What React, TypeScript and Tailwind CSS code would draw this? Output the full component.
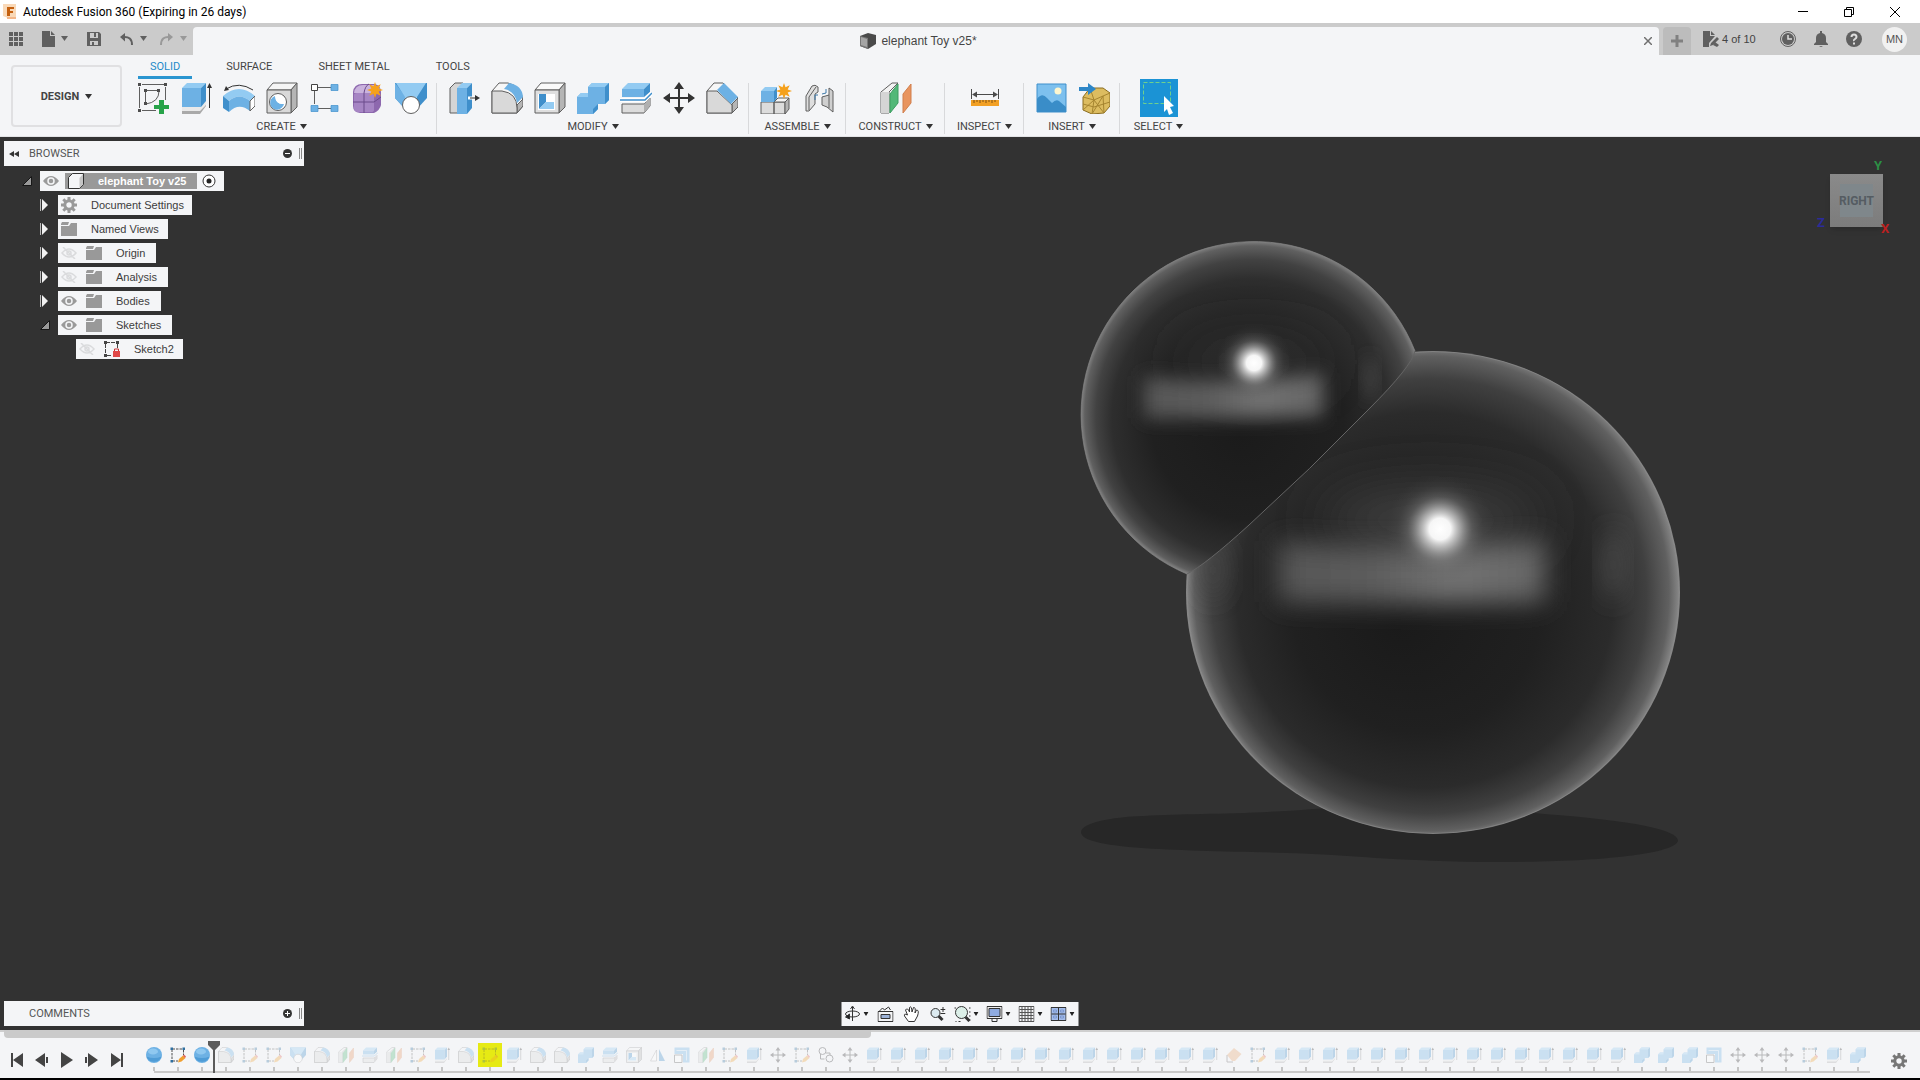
import type { ReactNode } from 'react';
import clsx from 'clsx';

const OUT = '#5f5f5f';
const BLUE = '#6db1e4';
const BLUE_LIGHT = '#93cbf2';
const BLUE_DARK = '#3f8fcb';

const star = (cx: number, cy: number) => {
  const points = Array.from({ length: 16 }, (_, i) => {
    const r = i % 2 ? 4 : 8;
    const a = (Math.PI * i) / 8;
    return `${(cx + r * Math.sin(a)).toFixed(1)},${(cy - r * Math.cos(a)).toFixed(1)}`;
  }).join(' ');
  return <polygon points={points} fill="#f5a11c" />;
};

const sketchFrame = (
  <>
    <path d="M5 2.500H27M2.500 5V26M28.500 5V18M5 28.500H19" stroke={OUT} strokeWidth="1" fill="none" />
    <path d="M1 1h3v3h-3zM27 1h3v3h-3zM1 27h3v3h-3z" fill="#4d4d4d" />
  </>
);

const glyphs: Record<string, ReactNode> = {
  sketch: (
    <>
      {sketchFrame}
      <path d="M9 8.500H22M8.500 9V22M22 9Q22 20 9 22" stroke={OUT} fill="none" />
      <path d="M7 7h3v3h-3zM20 7h3v3h-3zM7 20h3v3h-3z" fill="#4d4d4d" />
      <path d="M22 18h5v5h5v4h-5v5h-5v-5h-5v-4h5z" fill="#27a349" />
    </>
  ),
  sketchEdit: (
    <>
      <path d="M5 4H25M4 5V27M27 6V16M5 28H16" stroke="#4d4d4d" strokeWidth="2" strokeDasharray="5 2" fill="none" />
      <path d="M1 1h5v5h-5zM25 1h5v5h-5zM1 26h5v5h-5z" fill="#2f6f9f" />
      <path d="M16 31l2-7 8-7 5 5-8 7z" fill="#f0a030" />
      <path d="M26 17l2-2 4 4-2 3z" fill="#e06060" />
    </>
  ),
  extrude: (
    <>
      <path d="M2 28H20L26 21V24L20 32H2z" fill="#a9a9a9" />
      <path d="M2 25H21L26 19V23L20 29H2z" fill="#e9e9e9" />
      <path d="M2 6L7 1H26L21 6z" fill={BLUE_LIGHT} />
      <path d="M2 6H21V25H2z" fill={BLUE} />
      <path d="M21 6L26 1V19L21 25z" fill={BLUE_DARK} />
      <path d="M29.500 26V4" stroke="#333" />
      <path d="M29.500 1l2.500 5h-5z" fill="#333" />
    </>
  ),
  bend: (
    <>
      <path d="M0 14Q16 0 32 14L27 19Q16 10 6 19z" fill={BLUE_LIGHT} />
      <path d="M0 14L6 19V30L0 26z" fill={BLUE_DARK} />
      <path d="M6 19Q16 10 27 19V29Q16 20 6 30z" fill={BLUE} />
      <path d="M27 19L32 14V24L27 29z" fill="#fff" stroke={OUT} />
      <path d="M3 7Q16 -1 30 8" stroke="#333" fill="none" />
      <path d="M1 9l2-5 3 4z" fill="#333" />
    </>
  ),
  hole: (
    <>
      <path d="M1 8L7 1H31L25 8z" fill="#f5f5f5" stroke={OUT} />
      <path d="M25 8L31 1V25L25 31z" fill="#b5b5b5" stroke={OUT} />
      <path d="M1 8H25V31H1z" fill="#d9d9d9" stroke={OUT} />
      <circle cx="12" cy="20" r="8.500" fill="#fff" stroke={OUT} />
      <path d="M9 14A7 7 0 1 0 18 22Q10 23 9 14z" fill={BLUE} />
      <path d="M9 14Q10 23 18 22A7 7 0 0 0 9 14z" fill="#fff" />
    </>
  ),
  pattern: (
    <>
      <path d="M8 5.500H22M5.500 8V22M8 26.500H22" stroke={OUT} />
      <path d="M2.500 2.500h6v6h-6z" fill="#fff" stroke="#444" />
      <path d="M22 2.500h7v6h-7zM2 23.500h7v6h-7zM22 23.500h7v6h-7z" fill={BLUE} stroke={BLUE_DARK} strokeWidth=".7" />
    </>
  ),
  form: (
    <>
      <path d="M1 10Q2 2 10 2H23Q29 4 29 10V23Q28 28 22 31H8Q1 30 1 24z" fill="#8d68ae" />
      <path d="M2 11Q3 3 11 3H22Q28 5 28 8L22 11z" fill="#c9b2dd" />
      <path d="M2 13Q2 11 5 11H19Q22 11 22 14V28Q22 30 19 30H6Q2 30 2 26z" fill="#a685c4" />
      <path d="M12 11V31M1 20H22L29 15M12 11Q13 4 17 2" stroke="#6b4a8b" fill="none" />
      {star(23, 8)}
    </>
  ),
  loft: (
    <>
      <path d="M0 1H32V16L22 27H10L0 16z" fill={BLUE_DARK} />
      <path d="M0 1L10 14V27L0 16z" fill={BLUE} />
      <path d="M1 1H31L22 15V20H10V15z" fill={BLUE_LIGHT} />
      <circle cx="16" cy="23" r="8.500" fill="#fff" stroke={OUT} />
    </>
  ),
  pressPull: (
    <>
      <path d="M2 6L7 1H15L10 6V31H2z" fill="#d5d5d5" stroke={OUT} />
      <path d="M9 6L14 1H24L19 6z" fill={BLUE_LIGHT} />
      <path d="M9 6H19V32H9z" fill={BLUE} />
      <path d="M19 6L24 1V26L19 32z" fill={BLUE_DARK} />
      <path d="M20 16H28" stroke="#fff" strokeWidth="3" />
      <path d="M22 16H29" stroke="#333" />
      <path d="M27 13l5 3-5 3z" fill="#333" />
    </>
  ),
  fillet: (
    <>
      <path d="M1 9L8 1H17Q30 4 32 18V24L26 31H1z" fill="#f7f7f7" stroke={OUT} />
      <path d="M26 23L32 17V24L26 31z" fill="#b5b5b5" stroke={OUT} />
      <path d="M1 9H11Q26 11 26 26V31H1z" fill="#d9d9d9" stroke={OUT} />
      <path d="M13 7L18 1Q31 3 32 15L26 21Q24 9 13 7z" fill={BLUE} />
    </>
  ),
  shell: (
    <>
      <path d="M1 8L7 1H31L25 8z" fill="#fafafa" stroke={OUT} />
      <path d="M25 8L31 1V25L25 31z" fill="#b5b5b5" stroke={OUT} />
      <path d="M1 8H25V31H1z" fill="#dfdfdf" stroke={OUT} />
      <path d="M4 12H21V28H4z" fill="#fff" />
      <path d="M5 12H12V20L5 27z" fill={BLUE_DARK} />
      <path d="M5 27L12 20H20V27z" fill={BLUE_LIGHT} />
      <path d="M12 13H20V20H12z" fill="#fff" />
    </>
  ),
  combine: (
    <>
      <path d="M0 15L4 11H11V5L15 1H32V18L28 22H21V27L16 32H0z" fill={BLUE} />
      <path d="M11 5L15 1H32L28 5z M0 15L4 11H11V15z" fill={BLUE_LIGHT} />
      <path d="M28 5L32 1V18L28 22zM16 27L21 22V27L16 32z" fill={BLUE_DARK} />
    </>
  ),
  split: (
    <>
      <path d="M2 22H24L30 16V24L24 31H2z" fill="#dcdcdc" stroke={OUT} />
      <path d="M24 22L30 16V24L24 31z" fill="#b0b0b0" />
      <path d="M2 7L8 1H30L24 7z" fill={BLUE_LIGHT} />
      <path d="M2 7H24V15H2z" fill={BLUE} />
      <path d="M24 7L30 1V10L24 15z" fill={BLUE_DARK} />
      <path d="M0 18H25L32 11" stroke="#fff" strokeWidth="4" fill="none" />
      <path d="M0 18H25L32 11" stroke={BLUE_DARK} strokeWidth="1.500" fill="none" />
    </>
  ),
  move: (
    <>
      <path d="M16 4V28M4 16H28" stroke="#333" strokeWidth="2" />
      <path d="M16 0l5 7h-10zM16 32l5-7h-10zM0 16l7-5v10zM32 16l-7-5v10z" fill="#333" />
    </>
  ),
  chamfer: (
    <>
      <path d="M1 9L8 1H17L32 16V25L26 31H1z" fill="#f7f7f7" stroke={OUT} />
      <path d="M26 22L32 16V25L26 31z" fill="#b5b5b5" stroke={OUT} />
      <path d="M1 9H11L26 23V31H1z" fill="#d9d9d9" stroke={OUT} />
      <path d="M11 8L18 1L32 15L25 22z" fill={BLUE} />
    </>
  ),
  assemble: (
    <>
      <path d="M1 20H14V32H1zM14 20H25V32H14z" fill="#dcdcdc" stroke={OUT} />
      <path d="M14 20L18 16H29L25 20z" fill="#f5f5f5" stroke={OUT} />
      <path d="M25 20L29 16V27L25 32z" fill="#b5b5b5" stroke={OUT} />
      <path d="M1 9L5 5H17L14 9z" fill={BLUE_LIGHT} />
      <path d="M1 9H14V20H1z" fill={BLUE} />
      <path d="M14 9L17 5V16L14 20z" fill={BLUE_DARK} />
      {star(24, 9)}
    </>
  ),
  joint: (
    <>
      <path d="M3 29V14L9 4Q12 2 15 5V10L12 12V22L6 29z" fill="#dedede" stroke={OUT} />
      <path d="M6 28V15L13 5" stroke={OUT} fill="none" />
      <path d="M30 30V9L26 6V13L19 15V23L24 25z" fill="#cfcfcf" stroke={OUT} />
      <path d="M26 13V26" stroke={OUT} />
      <path d="M23 7V11L19 12M12 18V13H15" stroke="#3d79a8" fill="none" />
    </>
  ),
  plane: (
    <>
      <path d="M1 10L12 1H18L9 10V31H1z" fill="#f3f3f3" stroke={OUT} />
      <path d="M1 10H9V31H1z" fill="#d5d5d5" />
      <path d="M10 12L18 2V21L10 31z" fill="#52b878" stroke="#3c9d60" />
      <path d="M23 12L31 2V21L23 31z" fill="#e8945f" stroke="#d17f4c" />
    </>
  ),
  measure: (
    <>
      <path d="M2.500 7V17M29.500 7V17M4 12.500H28" stroke="#4a4a4a" />
      <path d="M3 12.500l5-3v6zM29 12.500l-5-3v6z" fill="#4a4a4a" />
      <path d="M2 18H30V24H2z" fill="#f2a024" />
      <path d="M5 18v3M8 18v2M11 18v3M14 18v2M17 18v3M20 18v2M23 18v3M26 18v2" stroke="#805010" />
    </>
  ),
  picture: (
    <>
      <path d="M2 2H31V30H2z" fill="#7dc0ee" stroke={BLUE_DARK} />
      <path d="M2 17Q7 10 12 16L17 21Q21 17 24 19L31 25V30H2z" fill="#3a8dc8" />
      <circle cx="23" cy="9" r="3.500" fill="#fdf6cf" />
    </>
  ),
  mesh: (
    <>
      <path d="M5 15L12 6H25L32 11V24L26 31L14 32L5 28z" fill="#dcbc60" stroke="#8a6c20" />
      <path d="M5 15L16 18L25 14L32 11M16 18L14 32M25 14L26 31M5 28L16 18L26 31M5 22L16 25L32 20M25 14L14 32M12 6L16 18" stroke="#a68530" fill="none" />
      <path d="M1 5H10V1L18 7L10 13V9H1z" fill="#2d86c7" />
    </>
  ),
  mirror: (
    <>
      <path d="M13 6V28H1z" fill="#fff" stroke={OUT} />
      <path d="M18 4V28H30z" fill={BLUE_DARK} />
    </>
  ),
  scale: (
    <>
      <path d="M1 1H31V31H18V14H1z" fill={BLUE} />
      <path d="M1 16H16V31H1z" fill="#fff" stroke={OUT} strokeWidth="2" />
      <path d="M5 7H25V27" stroke="#fff" strokeWidth="2" fill="none" opacity=".6" />
    </>
  ),
  link: (
    <g fill="none" stroke="#333" strokeWidth="2">
      <circle cx="9" cy="8" r="7" />
      <circle cx="23" cy="23" r="7" />
      <path d="M5 14v10h8M16 12h8v5" />
    </g>
  ),
  erase: (
    <>
      <path d="M2 16L16 2L31 14L18 28H12z" fill="#e8a36c" />
      <path d="M2 16V30H14" stroke={OUT} strokeWidth="2" fill="none" />
    </>
  ),
  sphere: (
    <>
      <circle cx="16" cy="16" r="16" fill={BLUE} />
      <path d="M1 19Q16 25 31 19A16 16 0 0 1 1 19z" fill="#4f9cd6" />
      <ellipse cx="14" cy="9" rx="10" ry="6" fill="#8fc8f0" />
    </>
  ),
};

function Glyph({ name, className = 'size-8' }: { name: string; className?: string }) {
  return (
    <svg viewBox="0 0 32 32" className={clsx('shrink-0', className)} aria-hidden="true">
      {glyphs[name]}
    </svg>
  );
}

function Caret({ className = 'text-[#333]' }: { className?: string }) {
  return (
    <svg viewBox="0 0 7 6" className={clsx('h-[6px] w-[7px] shrink-0', className)} aria-hidden="true">
      <path d="M0 0H7L3.500 5z" fill="currentColor" />
    </svg>
  );
}

function TitleBar() {
  return (
    <header className="flex h-[23px] shrink-0 items-center bg-white pl-[3px] font-['Roboto',sans-serif] text-[12px] text-black">
      <svg viewBox="0 0 14 16" className="h-4 w-[14px]" aria-hidden="true">
        <path d="M0 0H13V14H5L0 12z" fill="#f9d9b8" />
        <path d="M4 3H11V5H7V7H10V9H7V12H4z" fill="#c4600f" />
        <path d="M4 13H13V15H4z" fill="#f3b78a" />
      </svg>
      <h1 className="ml-[6px]">Autodesk Fusion 360 (Expiring in 26 days)</h1>
      <div className="ml-auto flex">
        <button type="button" aria-label="Minimize" className="flex h-[22px] w-[46px] items-center justify-center">
          <svg viewBox="0 0 10 10" className="size-[10px]"><path d="M0 4.500H10" stroke="#000" /></svg>
        </button>
        <button type="button" aria-label="Restore" className="flex h-[22px] w-[46px] items-center justify-center">
          <svg viewBox="0 0 10 10" className="size-[10px]" fill="none" stroke="#000">
            <path d="M.5 2.500H7.500V9.500H.5zM2.500 2V.5H9.500V7.500H8" />
          </svg>
        </button>
        <button type="button" aria-label="Close" className="mr-[2px] flex h-[22px] w-[46px] items-center justify-center">
          <svg viewBox="0 0 10 10" className="size-[10px]"><path d="M0 0L10 10M10 0L0 10" stroke="#000" /></svg>
        </button>
      </div>
    </header>
  );
}

function QuickBar() {
  return (
    <div className="flex h-8 shrink-0 bg-[#cbcbcb] text-[#606060]">
      <div className="flex w-[193px] shrink-0 items-center pl-[9px]">
        <button type="button" aria-label="Data panel">
          <svg viewBox="0 0 14 14" className="size-[14px]" fill="currentColor">
            <path d="M0 0h4v4h-4zM5 0h4v4h-4zM10 0h4v4h-4zM0 5h4v4h-4zM5 5h4v4h-4zM10 5h4v4h-4zM0 10h4v4h-4zM5 10h4v4h-4zM10 10h4v4h-4z" />
          </svg>
        </button>
        <button type="button" aria-label="File" className="ml-[19px] flex items-center gap-[6px]">
          <svg viewBox="0 0 13 16" className="h-4 w-[13px]" fill="currentColor"><path d="M0 0H8V5H13V16H0zM9 0L13 4H9z" /></svg>
          <Caret className="text-[#606060]" />
        </button>
        <button type="button" aria-label="Save" className="ml-[19px]">
          <svg viewBox="0 0 14 14" className="size-[14px]">
            <path d="M0 0H12L14 2V14H0z" fill="currentColor" />
            <path d="M3 1H11V6H3zM3 9H11V13H3z" fill="#cbcbcb" />
            <path d="M7 1H9V5H7zM5 10H7V14H5z" fill="currentColor" />
          </svg>
        </button>
        <button type="button" aria-label="Undo" className="ml-[19px] flex items-center gap-[7px]">
          <svg viewBox="0 0 13 12" className="h-3 w-[13px]">
            <path d="M3 4Q12 3 12 12" stroke="currentColor" strokeWidth="2" fill="none" />
            <path d="M0 4L5 0V8.500z" fill="currentColor" />
          </svg>
          <Caret className="text-[#606060]" />
        </button>
        <button type="button" aria-label="Redo" className="ml-[13px] flex items-center gap-[7px] text-[#999]">
          <svg viewBox="0 0 13 12" className="h-3 w-[13px]">
            <path d="M10 4Q1 3 1 12" stroke="currentColor" strokeWidth="2" fill="none" />
            <path d="M13 4L8 0V8.500z" fill="currentColor" />
          </svg>
          <Caret className="text-[#999]" />
        </button>
      </div>
      <div className="mt-1 flex min-w-0 flex-1 items-center rounded-t bg-[#f4f5f7]">
        <div className="flex flex-1 items-center justify-center gap-[5px] font-['Liberation_Sans',sans-serif] text-[12px] text-[#454545]">
          <svg viewBox="0 0 16 16" className="size-4" aria-hidden="true">
            <path d="M0 3L8 0L16 2V11L8 16L0 13z" fill="#4a4a4a" />
            <path d="M0 3L8 5V16L0 13z" fill="#777" />
            <path d="M1 4L7 6V14L1 12z" fill="#a5a5a5" />
          </svg>
          elephant Toy v25*
        </div>
        <button type="button" aria-label="Close document" className="mr-[7px]">
          <svg viewBox="0 0 8 8" className="size-2"><path d="M0 0L8 8M8 0L0 8" stroke="#707070" strokeWidth="1.500" /></svg>
        </button>
      </div>
      <button type="button" aria-label="New tab" className="mt-1 ml-1 flex w-7 shrink-0 items-center justify-center rounded-t bg-[#bcbcbc]">
        <svg viewBox="0 0 12 12" className="size-3"><path d="M6 0V12M0 6H12" stroke="#808080" strokeWidth="3" /></svg>
      </button>
      <div className="flex w-[229px] shrink-0 items-center pl-3">
        <button type="button" className="flex items-center gap-[3px] font-['Liberation_Sans',sans-serif] text-[11px] text-[#444]">
          <svg viewBox="0 0 16 16" className="size-4" fill="#606060">
            <path d="M0 0H7V5H12L6 12V16H0zM8 0L12 4H8zM8 12L14 6L16 8L10 14L7 15z" />
            <path d="M12 11L16 14L14 16L10 14z" />
          </svg>
          4 of 10
        </button>
        <button type="button" aria-label="Job status" className="ml-auto">
          <svg viewBox="0 0 16 16" className="size-4">
            <circle cx="8" cy="8" r="7.500" fill="none" stroke="currentColor" />
            <circle cx="8" cy="8" r="6" fill="currentColor" />
            <path d="M8 4V8H12" stroke="#ddd" fill="none" strokeWidth="1.500" />
          </svg>
        </button>
        <button type="button" aria-label="Notifications" className="ml-[17px]">
          <svg viewBox="0 0 16 16" className="size-4" fill="currentColor">
            <path d="M7 0H9V2Q13 3 13 7V11L15 13V14H1V13L3 11V7Q3 3 7 2zM6 15H10L8 16z" />
          </svg>
        </button>
        <button type="button" aria-label="Help" className="ml-[17px]">
          <svg viewBox="0 0 16 16" className="size-4">
            <circle cx="8" cy="8" r="8" fill="currentColor" />
            <path d="M5.500 6Q5.500 3.500 8 3.500T10.500 6Q10.500 7 9 8T8 10M8 11.500V13.500" stroke="#ddd" strokeWidth="2" fill="none" />
          </svg>
        </button>
        <button type="button" className="mr-[13px] ml-5 size-[25px] rounded-full bg-[#f1f1f1] font-['Liberation_Sans',sans-serif] text-[11px] text-[#555]">
          MN
        </button>
      </div>
    </div>
  );
}

const groups = [
  { label: 'CREATE', width: 'w-[311px]', icons: ['sketch', 'extrude', 'bend', 'hole', 'pattern', 'form', 'loft'] },
  { label: 'MODIFY', width: 'w-[312px]', icons: ['pressPull', 'fillet', 'shell', 'combine', 'split', 'move', 'chamfer'] },
  { label: 'ASSEMBLE', width: 'w-[97px]', icons: ['assemble', 'joint'] },
  { label: 'CONSTRUCT', width: 'w-[99px]', icons: ['plane'] },
  { label: 'INSPECT', width: 'w-[79px]', icons: ['measure'] },
  { label: 'INSERT', width: 'w-[96px]', icons: ['picture', 'mesh'] },
];

function Ribbon() {
  return (
    <section className="flex h-[82px] shrink-0 border-b border-[#e2e3e5] bg-[#f4f5f7] font-['Roboto',sans-serif] text-[11px] text-[#444]">
      <button
        type="button"
        className="mt-[10px] ml-[11px] flex h-[62px] w-[111px] shrink-0 items-center justify-center gap-[6px] rounded border-2 border-[#e0e0e2] pt-[2px] font-bold"
      >
        DESIGN <Caret />
      </button>
      <div className="ml-1">
        <nav className="ml-3 flex h-6 gap-[22px]">
          <button type="button" className="border-b-[3px] border-[#2a95d0] px-3 pt-[3px] text-[#1d8ac9]">SOLID</button>
          {['SURFACE', 'SHEET METAL', 'TOOLS'].map((tab) => (
            <button key={tab} type="button" className="border-b-[3px] border-transparent px-3 pt-[3px]">{tab}</button>
          ))}
        </nav>
        <div className="flex h-[57px]">
          {groups.map((group) => (
            <div key={group.label} className={clsx('relative flex flex-col items-center', group.width)}>
              <div className="flex h-[38px] shrink-0 items-center gap-[11px]">
                {group.icons.map((icon) => (
                  <button key={icon} type="button" aria-label={icon}>
                    <Glyph name={icon} />
                  </button>
                ))}
              </div>
              <button type="button" className="flex shrink-0 items-center gap-1 leading-5">
                {group.label} <Caret />
              </button>
              <span className="absolute top-1 right-0 h-[51px] w-px bg-[#d8d9db]" />
            </div>
          ))}
          <div className="flex w-[77px] flex-col items-center">
            <div className="flex h-[38px] shrink-0 items-center">
              <button type="button" aria-label="select" className="bg-[#1b93d5]">
                <svg viewBox="0 0 38 38" className="size-[38px]">
                  <path d="M3.500 3.500H30.500V24.500H3.500z" fill="none" stroke="#6fd08c" strokeDasharray="4 2" />
                  <path d="M24 17L34 27L30 28L33 34L29 36L27 30L24 33z" fill="#fff" />
                </svg>
              </button>
            </div>
            <button type="button" className="flex shrink-0 items-center gap-1 leading-5">
              SELECT <Caret />
            </button>
          </div>
        </div>
      </div>
    </section>
  );
}

function Eye({ off = false }: { off?: boolean }) {
  return (
    <svg viewBox="0 0 16 12" className="h-3 w-4 shrink-0" aria-hidden="true">
      {off ? (
        <g stroke="#dadbdd" fill="none" strokeWidth="1.500">
          <path d="M1 6Q8 -2 15 6Q8 14 1 6zM2 0L14 12" />
          <circle cx="8" cy="6" r="2" />
        </g>
      ) : (
        <>
          <path d="M0 6Q8 -4 16 6Q8 16 0 6z" fill="#9a9a9a" />
          <circle cx="8" cy="6" r="3" fill="#9a9a9a" stroke="#f4f5f7" strokeWidth="1.500" />
        </>
      )}
    </svg>
  );
}

function Gear({ className }: { className: string }) {
  return (
    <svg viewBox="0 0 16 16" className={clsx('size-4 shrink-0', className)} aria-hidden="true">
      <circle cx="8" cy="8" r="4.200" fill="none" stroke="currentColor" strokeWidth="3" />
      <path d="M8 0V3M8 13V16M0 8H3M13 8H16M2.300 2.300L4.500 4.500M11.500 11.500L13.700 13.700M13.700 2.300L11.500 4.500M4.500 11.500L2.300 13.700" stroke="currentColor" strokeWidth="3" />
    </svg>
  );
}

function Folder() {
  return (
    <svg viewBox="0 0 16 14" className="h-[14px] w-4 shrink-0" aria-hidden="true">
      <path d="M0 4H8L10 1H16V14H0z" fill="#999" />
      <path d="M0 2L1 0H8L7 3H0z" fill="#999" />
    </svg>
  );
}

function Twisty({ open = false }: { open?: boolean }) {
  return (
    <svg viewBox="0 0 10 12" className="h-3 w-[10px] shrink-0" aria-hidden="true">
      {open ? (
        <path d="M9.500 1.500V10.500H.5z" fill="#999" stroke="#161616" />
      ) : (
        <>
          <path d="M.5 0V12" stroke="#bbb" />
          <path d="M2 0L8 6L2 12z" fill="#f2f2f2" />
        </>
      )}
    </svg>
  );
}

const tree = [
  { label: 'Named Views' },
  { label: 'Origin', eye: 'off' },
  { label: 'Analysis', eye: 'off' },
  { label: 'Bodies', eye: 'on' },
  { label: 'Sketches', eye: 'on', open: true },
];

function Browser() {
  return (
    <aside className="absolute top-1 left-1 w-[300px] font-['Liberation_Sans',sans-serif] text-[11px] text-[#3c3c3c]">
      <div className="flex h-[25px] items-center bg-[#f4f5f7] pr-[2px] pl-[5px] font-['Roboto',sans-serif] text-[#555]">
        <svg viewBox="0 0 10 6" className="h-[6px] w-[10px]" aria-hidden="true">
          <path d="M5 0V6L0 3zM10 0V6L5 3z" fill="#333" />
        </svg>
        <h2 className="ml-[10px] pt-[2px]">BROWSER</h2>
        <PanelEnd />
      </div>
      <ul className="mt-[5px] flex flex-col gap-1">
        <li className="flex h-5 items-center pl-[18px]">
          <Twisty open />
          <div className="ml-2 flex h-5 items-center bg-[#f4f5f7] pl-[3px]">
            <Eye />
            <div className="ml-[6px] flex h-4 items-center bg-[#999] pr-[11px] pl-[3px] font-bold text-white">
              <svg viewBox="0 0 16 16" className="mr-[14px] size-4" aria-hidden="true">
                <path d="M.5 4.500L4.500 .5H15.500V11.500L11.500 15.500H.5z" fill="#f4f5f7" stroke="#333" />
                <path d="M11.500 5L15 1V11.500L11.500 15z" fill="#c5c5c5" />
              </svg>
              elephant Toy v25
            </div>
            <svg viewBox="0 0 14 14" className="mr-2 ml-[5px] size-[14px]" aria-hidden="true">
              <circle cx="7" cy="7" r="6" fill="#fff" stroke="#333" />
              <circle cx="7" cy="7" r="2.500" fill="#222" />
            </svg>
          </div>
        </li>
        <li className="flex h-5 items-center pl-9">
          <Twisty />
          <div className="ml-2 flex h-5 items-center bg-[#f4f5f7] pr-2 pl-[3px]">
            <Gear className="text-[#999]" />
            <span className="ml-[14px]">Document Settings</span>
          </div>
        </li>
        {tree.map((node) => (
          <li key={node.label} className="flex h-5 items-center pl-9">
            <Twisty open={node.open} />
            <div className={clsx('ml-2 flex h-5 items-center gap-[9px] bg-[#f4f5f7] pl-[3px]', node.eye ? 'pr-[11px]' : 'pr-[9px]')}>
              {node.eye && <Eye off={node.eye === 'off'} />}
              <Folder />
              <span className="ml-[5px]">{node.label}</span>
            </div>
          </li>
        ))}
        <li className="flex h-5 items-center pl-[72px]">
          <div className="flex h-5 items-center gap-[9px] bg-[#f4f5f7] pr-[9px] pl-[3px]">
            <Eye off />
            <svg viewBox="0 0 16 16" className="size-4" aria-hidden="true">
              <path d="M2 1.500H12M1.500 3V13M13.500 3V8M3 14.500H8" stroke="#444" strokeDasharray="4 1" />
              <path d="M0 0h3v3h-3zM12 0h3v3h-3zM0 13h3v3h-3z" fill="#444" />
              <path d="M9 10h7v6h-7z" fill="#e04848" />
              <path d="M10.500 10V8H14.500V10" stroke="#c83333" fill="none" />
            </svg>
            <span className="ml-[5px]">Sketch2</span>
          </div>
        </li>
      </ul>
    </aside>
  );
}

function PanelEnd({ plus = false }: { plus?: boolean }) {
  return (
    <>
      <button type="button" aria-label={plus ? 'Expand' : 'Collapse'} className="ml-auto">
        <svg viewBox="0 0 9 9" className="size-[9px]">
          <circle cx="4.500" cy="4.500" r="4.500" fill="#333" />
          <path d={plus ? 'M2 4.500H7M4.500 2V7' : 'M2 4.500H7'} stroke="#fff" />
        </svg>
      </button>
      <span className="ml-[7px] h-[11px] w-[3px] border-x border-[#888]" />
    </>
  );
}

function Scene() {
  return (
    <svg viewBox="0 137 1920 893" preserveAspectRatio="xMaxYMid meet" className="absolute inset-0 size-full" role="img" aria-label="Model view">
      <defs>
        <radialGradient id="rimBig" gradientUnits="userSpaceOnUse" cx="1433" cy="592" r="247" fx="1400" fy="625">
          <stop offset="0" stopColor="#1a1a1a" />
          <stop offset=".5" stopColor="#202020" />
          <stop offset=".76" stopColor="#2b2b2b" />
          <stop offset=".88" stopColor="#404040" />
          <stop offset=".96" stopColor="#606060" />
          <stop offset="1" stopColor="#8a8a8a" />
        </radialGradient>
        <radialGradient id="rimSmall" gradientUnits="userSpaceOnUse" cx="1254" cy="414" r="174" fx="1240" fy="435">
          <stop offset="0" stopColor="#1b1b1b" />
          <stop offset=".55" stopColor="#202020" />
          <stop offset=".8" stopColor="#2e2e2e" />
          <stop offset=".9" stopColor="#424242" />
          <stop offset=".97" stopColor="#606060" />
          <stop offset="1" stopColor="#8a8a8a" />
        </radialGradient>
        <radialGradient id="glow">
          <stop offset="0" stopColor="#fff" />
          <stop offset=".2" stopColor="#f6f6f6" />
          <stop offset=".38" stopColor="#ccc" stopOpacity=".7" />
          <stop offset=".6" stopColor="#888" stopOpacity=".35" />
          <stop offset=".8" stopColor="#666" stopOpacity=".13" />
          <stop offset="1" stopColor="#555" stopOpacity="0" />
        </radialGradient>
        <linearGradient id="band">
          <stop offset="0" stopColor="#565656" />
          <stop offset=".35" stopColor="#5c5c5c" />
          <stop offset=".65" stopColor="#727272" />
          <stop offset="1" stopColor="#646464" />
        </linearGradient>
        <filter id="blurS" x="-100%" y="-100%" width="300%" height="300%"><feGaussianBlur stdDeviation="9" /></filter>
        <filter id="blurM" x="-100%" y="-100%" width="300%" height="300%"><feGaussianBlur stdDeviation="13" /></filter>
        <filter id="blurL" x="-100%" y="-300%" width="300%" height="700%"><feGaussianBlur stdDeviation="28" /></filter>
        <clipPath id="smallClip">
          <path d="M1415 351A173 173 0 1 0 1187 574Q1205 565 1249 525Q1310 470 1369 409Q1412 366 1415 351z" />
        </clipPath>
        <clipPath id="bigClip"><ellipse cx="1433" cy="592.500" rx="247" ry="241.500" /></clipPath>
      </defs>
      <path
        d="M1081 832C1082 823 1110 817 1144 816C1190 813 1240 815 1313 809C1400 804 1480 808 1544 814Q1678 824 1678 841C1674 854 1600 862 1500 862C1400 862 1340 854 1287 853C1180 850 1081 850 1081 832z"
        fill="#272727"
      />
      <g clipPath="url(#bigClip)">
        <ellipse cx="1433" cy="592.500" rx="248" ry="243" fill="url(#rimBig)" />
        <ellipse cx="1430" cy="520" rx="110" ry="30" fill="#444" filter="url(#blurL)" />
        <path d="M1278 541Q1400 552 1546 540V602Q1400 606 1278 602z" fill="url(#band)" filter="url(#blurM)" />
        <ellipse cx="1613" cy="565" rx="7" ry="36" fill="#585858" filter="url(#blurM)" />
        <ellipse cx="1213" cy="570" rx="10" ry="30" fill="#444" filter="url(#blurM)" />
        <circle cx="1440" cy="529" r="54" fill="url(#glow)" />
        <ellipse cx="1433" cy="592.500" rx="246" ry="241" fill="none" stroke="#8c8c8c" strokeOpacity=".6" />
      </g>
      <g clipPath="url(#smallClip)">
        <circle cx="1254" cy="414" r="174" fill="url(#rimSmall)" />
        <ellipse cx="1254" cy="362" rx="75" ry="18" fill="#3c3c3c" filter="url(#blurL)" />
        <path d="M1144 376Q1230 388 1323 373V416Q1230 419 1144 418z" fill="url(#band)" filter="url(#blurS)" />
        <ellipse cx="1370" cy="378" rx="4" ry="22" fill="#555" filter="url(#blurS)" />
        <circle cx="1254" cy="363" r="38" fill="url(#glow)" />
      </g>
      <path d="M1415 351A173 173 0 1 0 1187 574" fill="none" stroke="#848484" strokeOpacity=".7" />
      <path d="M1187 574Q1205 565 1249 525Q1310 470 1369 409Q1412 366 1415 351" fill="none" stroke="#646464" />
    </svg>
  );
}

function ViewCube() {
  return (
    <div className="absolute top-[37px] right-[37px] font-['Roboto',sans-serif] text-[13px] leading-4 font-bold">
      <button type="button" className="flex size-[53px] items-center justify-center bg-linear-to-b from-[#8a8a8a] to-[#7c7c7c] text-[12px] text-[#555c62] shadow-md">
        <span className="flex h-[33px] w-[33px] items-center justify-center bg-[#7f878b]">RIGHT</span>
      </button>
      <span className="absolute -top-4 left-[44px] text-[#2c8f45]">Y</span>
      <span className="absolute top-[41px] -left-[13px] text-[#2b2b9a]">Z</span>
      <span className="absolute top-[47px] left-[51px] text-[#bb2020]">X</span>
    </div>
  );
}

const navTools: { name: string; menu?: boolean; art: ReactNode }[] = [
  { name: 'Orbit', menu: true, art: <><ellipse cx="8" cy="8" rx="7" ry="3" /><path d="M8 1V15M6 3L8 0L10 3" /><path d="M1 11L5 8V13z" fill="#222" /></> },
  { name: 'Look at', art: <><path d="M.5 5.500H15.500V15.500H.5zM2 5L5 2L7 4L11 1L13 4" /><path d="M3.500 8.500H12.500V12.500H3.500z" fill="#9db3d8" /></> },
  { name: 'Pan', art: <path d="M5 15.500L1 10Q0 7 4 9L2 4Q4 1 6 6L6 1.500Q8 -1 8.500 6L10 1.500Q12.500 1 11.500 7L13 4Q16 4 14 10L11 15.500z" fill="#fff" /> },
  { name: 'Zoom', art: <><circle cx="6" cy="7" r="4.500" fill="#dceaf0" /><path d="M9 10L13 14" strokeWidth="3" /><path d="M11 3.500H16M13.500 1V6M11 7.500H16" /></> },
  { name: 'Fit', menu: true, art: <><path d="M15.500 1V15M6 15.500H1M.5 1V3" strokeDasharray="2 2" /><circle cx="7" cy="6.500" r="6" fill="#dcefe8" /><path d="M11 11L15 15" strokeWidth="3" /></> },
  { name: 'Display', menu: true, art: <><path d="M.5 .5H15.500V12.500H.5z" fill="#eee" /><path d="M2.500 2.500H13.500V10.500H2.500z" fill="#8fabe0" /><path d="M5.500 12.500V15.500H10.500V12.500" /></> },
  { name: 'Grid', menu: true, art: <path d="M.5 .5H15.500V15.500H.5zM3.500 1V15M6.500 1V15M9.500 1V15M12.500 1V15M1 3.500H15M1 6.500H15M1 9.500H15M1 12.500H15" stroke="#555" /> },
  { name: 'Viewports', menu: true, art: <><path d="M.5 1.500H15.500V14.500H.5z" fill="#a4bdec" /><path d="M8 2V14M1 8H15" /><path d="M3 4H6V6H3zM10 4H13V6H10zM3 10H6V12H3zM10 10H13V12H10z" stroke="#7d98cf" /></> },
];

function NavBar() {
  return (
    <div className="absolute bottom-1 left-1/2 flex h-6 w-[237px] -translate-x-1/2 items-center gap-2 bg-[#f4f5f7] px-[3px]">
      {navTools.map((tool) => (
        <button key={tool.name} type="button" aria-label={tool.name} className={clsx('flex shrink-0 items-center gap-[3px]', !tool.menu && 'mx-px')}>
          <svg viewBox="0 0 16 16" className="size-4" fill="none" stroke="#333">{tool.art}</svg>
          {tool.menu && (
            <svg viewBox="0 0 5 4" className="h-1 w-[5px]"><path d="M0 0H5L2.500 4z" fill="#222" /></svg>
          )}
        </button>
      ))}
    </div>
  );
}

const repeat = (name: string, count: number) => Array<string>(count).fill(name);

const features = [
  'sphere', 'sketchEdit', 'sphere', 'fillet', 'sketchEdit', 'sketchEdit', 'loft', 'fillet', 'plane', 'split', 'plane',
  'sketchEdit', 'extrude', 'fillet', 'sketchEdit', 'extrude', 'fillet', 'fillet', 'combine', 'split', 'shell', 'mirror',
  'scale', 'plane', 'sketchEdit', 'extrude', 'move', 'sketchEdit', 'link', 'move',
  ...repeat('extrude', 15), 'erase', 'sketchEdit', ...repeat('extrude', 15),
  ...repeat('combine', 3), 'scale', ...repeat('move', 3), 'sketchEdit', 'extrude', 'combine',
];
const ACTIVE = 3;
const HIGHLIGHTED = 14;

const playback = [
  { name: 'Go to start', d: 'M2 1H4V15H2zM4 8L14 1V15z' },
  { name: 'Step back', d: 'M1 8L11 1V15zM12 5H14V11H12z' },
  { name: 'Play', d: 'M2 0L14 8L2 16z' },
  { name: 'Step forward', d: 'M1 5H3V11H1zM4 1L14 8L4 15z' },
  { name: 'Go to end', d: 'M2 1L12 8L2 15zM12 1H14V15H12z' },
];

function Timeline() {
  return (
    <footer className="relative flex h-[50px] shrink-0 border-t-2 border-b-2 border-t-[#cfcfcf] border-b-black bg-[#f4f5f7]">
      <div className="absolute -top-[2px] left-1 h-2 w-[867px] rounded-b bg-[#cacaca]" />
      <div className="flex w-[142px] shrink-0 items-center gap-[9px] pt-[10px] pl-[9px]">
        {playback.map((step) => (
          <button key={step.name} type="button" aria-label={step.name}>
            <svg viewBox="0 0 16 16" className="size-4" fill="#444">
              <path d={step.d} />
            </svg>
          </button>
        ))}
      </div>
      <ol className="flex min-w-0 overflow-hidden pt-[11px]">
        {features.map((feature, i) => (
          <li key={i} className="relative flex w-6 shrink-0 flex-col items-center">
            <span className={clsx('flex h-6 w-6 items-center justify-center', i === HIGHLIGHTED && 'bg-[#e6ea14]')}>
              <Glyph name={feature} className={clsx('size-4', i >= ACTIVE && 'opacity-30')} />
            </span>
            <span className="h-1 w-[2px] bg-[#c4c4c4]" />
            <span className={clsx('h-[2px] bg-[#c9c9c9]', i === 0 ? 'ml-auto w-1/2' : 'w-full')} />
            {i === ACTIVE && (
              <svg viewBox="0 0 12 32" className="absolute -top-[2px] -left-[6px] h-8 w-3" aria-hidden="true">
                <path d="M0 0H12V4L7 9V32H5V9L0 4z" fill="#5b5b5b" />
              </svg>
            )}
          </li>
        ))}
      </ol>
      <button type="button" aria-label="Timeline settings" className="mt-3 mr-[13px] ml-auto">
        <Gear className="text-[#777]" />
      </button>
    </footer>
  );
}

export default function App() {
  return (
    <div className="flex h-screen flex-col overflow-hidden">
      <TitleBar />
      <QuickBar />
      <Ribbon />
      <main className="relative min-h-0 flex-1 bg-[#323232]">
        <Scene />
        <Browser />
        <ViewCube />
        <section className="absolute bottom-1 left-1 flex h-[25px] w-[300px] items-center bg-[#f4f5f7] pr-[2px] pl-[25px] font-['Roboto',sans-serif] text-[11px] text-[#555]">
          <h2 className="pt-[2px]">COMMENTS</h2>
          <PanelEnd plus />
        </section>
        <NavBar />
      </main>
      <Timeline />
    </div>
  );
}
